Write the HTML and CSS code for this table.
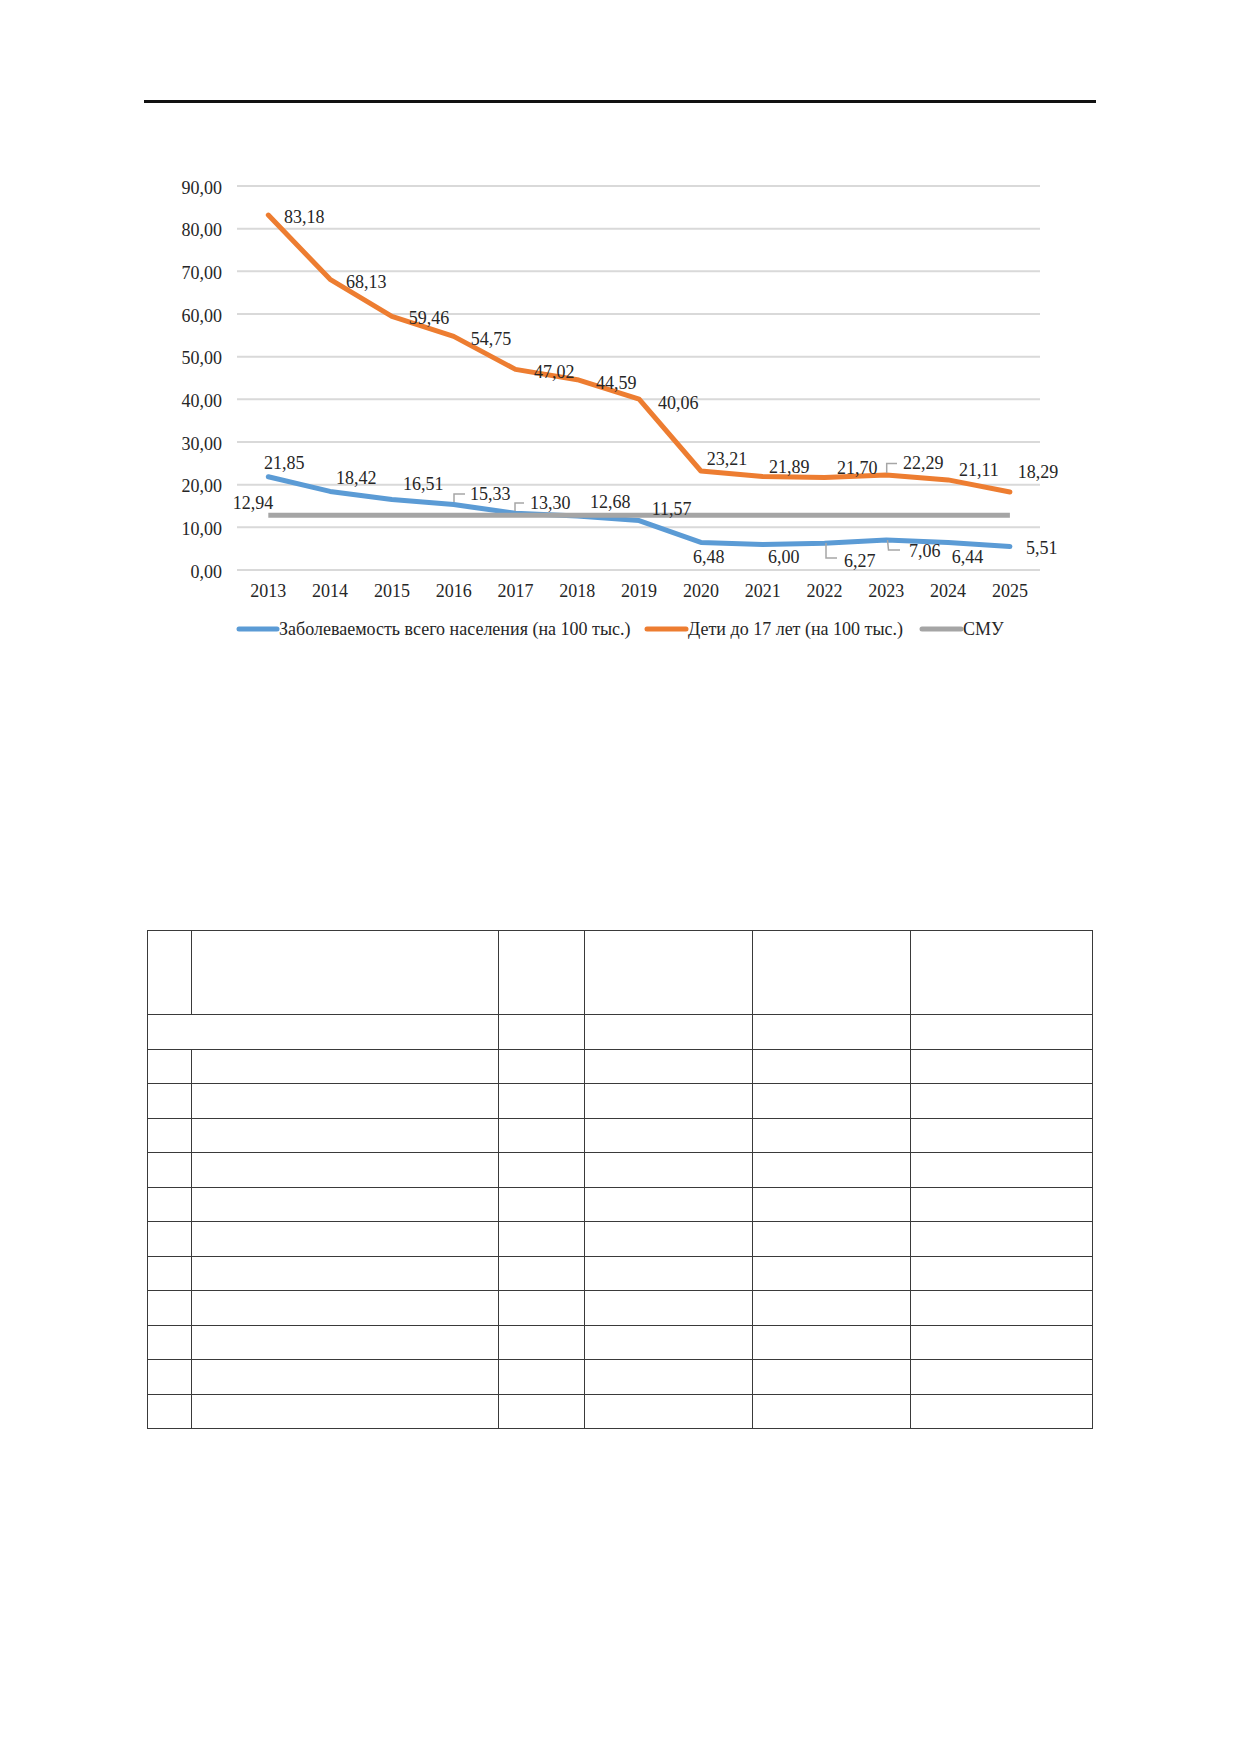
FILE: index.html
```html
<!DOCTYPE html>
<html lang="ru">
<head>
<meta charset="utf-8">
<title>Заболеваемость</title>
<link rel="stylesheet" href="styles.css">
</head>
<body>
<div class="page">
  <div class="rule"></div>

  <svg class="chart" width="1240" height="500" viewBox="0 160 1240 500" xmlns="http://www.w3.org/2000/svg">
    <g class="grid">
      <line x1="237" y1="186" x2="1040" y2="186"/>
      <line x1="237" y1="228.7" x2="1040" y2="228.7"/>
      <line x1="237" y1="271.3" x2="1040" y2="271.3"/>
      <line x1="237" y1="314" x2="1040" y2="314"/>
      <line x1="237" y1="356.7" x2="1040" y2="356.7"/>
      <line x1="237" y1="399.3" x2="1040" y2="399.3"/>
      <line x1="237" y1="442" x2="1040" y2="442"/>
      <line x1="237" y1="484.7" x2="1040" y2="484.7"/>
      <line x1="237" y1="527.3" x2="1040" y2="527.3"/>
      <line x1="237" y1="570" x2="1040" y2="570"/>
    </g>
    <g class="ylab">
      <text x="222" y="193.5">90,00</text>
      <text x="222" y="236.2">80,00</text>
      <text x="222" y="278.8">70,00</text>
      <text x="222" y="321.5">60,00</text>
      <text x="222" y="364.2">50,00</text>
      <text x="222" y="406.8">40,00</text>
      <text x="222" y="449.5">30,00</text>
      <text x="222" y="492.2">20,00</text>
      <text x="222" y="534.8">10,00</text>
      <text x="222" y="577.5">0,00</text>
    </g>
    <g class="xlab">
      <text x="268.3" y="597">2013</text>
      <text x="330.1" y="597">2014</text>
      <text x="391.9" y="597">2015</text>
      <text x="453.7" y="597">2016</text>
      <text x="515.5" y="597">2017</text>
      <text x="577.3" y="597">2018</text>
      <text x="639.1" y="597">2019</text>
      <text x="700.9" y="597">2020</text>
      <text x="762.7" y="597">2021</text>
      <text x="824.5" y="597">2022</text>
      <text x="886.3" y="597">2023</text>
      <text x="948.1" y="597">2024</text>
      <text x="1009.9" y="597">2025</text>
    </g>

    <polyline class="s-blue" points="268.3,476.8 330.1,491.4 391.9,499.6 453.7,504.6 515.5,513.3 577.3,515.9 639.1,520.6 700.9,542.4 762.7,544.4 824.5,543.2 886.3,539.9 948.1,542.5 1009.9,546.5"/>
    <polyline class="s-orange" points="268.3,215.1 330.1,279.3 391.9,316.3 453.7,336.4 515.5,369.4 577.3,379.7 639.1,399.1 700.9,471 762.7,476.6 824.5,477.4 886.3,474.9 948.1,479.9 1009.9,492"/>
    <polyline class="s-grey" points="268.3,515.2 1009.9,515.2"/>

    <g class="leader">
      <polyline points="454,502 454,494 465,494"/>
      <polyline points="515,511 515,503 524,503"/>
      <polyline points="886.7,473 886.7,463.5 897,463.5"/>
      <polyline points="826,543 826,558 837,558"/>
      <polyline points="887.5,540 888.5,550 900,550"/>
    </g>

    <g class="dlab">
      <text x="284" y="223.3">83,18</text>
      <text x="346" y="287.7">68,13</text>
      <text x="408.7" y="324">59,46</text>
      <text x="470.7" y="345">54,75</text>
      <text x="534" y="378">47,02</text>
      <text x="596" y="388.5">44,59</text>
      <text x="658" y="408.7">40,06</text>
      <text x="706.7" y="465.3">23,21</text>
      <text x="769" y="472.7">21,89</text>
      <text x="837" y="473.7">21,70</text>
      <text x="903" y="469.3">22,29</text>
      <text x="959" y="476">21,11</text>
      <text x="1017.7" y="477.7">18,29</text>

      <text x="264" y="468.7">21,85</text>
      <text x="336" y="484.3">18,42</text>
      <text x="403" y="490">16,51</text>
      <text x="470" y="500">15,33</text>
      <text x="530" y="508.7">13,30</text>
      <text x="590" y="507.7">12,68</text>
      <text x="651.7" y="515">11,57</text>
      <text x="693" y="563.3">6,48</text>
      <text x="768" y="563">6,00</text>
      <text x="844" y="567">6,27</text>
      <text x="909" y="557">7,06</text>
      <text x="951.7" y="563.3">6,44</text>
      <text x="1026" y="553.7">5,51</text>

      <text x="232.7" y="508.7">12,94</text>
    </g>

    <g class="legend">
      <line class="lg-blue" x1="239" y1="629" x2="277" y2="629"/>
      <text x="279" y="635">Заболеваемость всего населения (на 100 тыс.)</text>
      <line class="lg-orange" x1="647" y1="629" x2="686" y2="629"/>
      <text x="688" y="635">Дети до 17 лет (на 100 тыс.)</text>
      <line class="lg-grey" x1="922" y1="629" x2="961" y2="629"/>
      <text x="963" y="635">СМУ</text>
    </g>
  </svg>

  <table class="data">
    <colgroup>
      <col class="c1"><col class="c2"><col class="c3"><col class="c4"><col class="c5"><col class="c6">
    </colgroup>
    <tr class="head"><td></td><td></td><td></td><td></td><td></td><td></td></tr>
    <tr><td colspan="2"></td><td></td><td></td><td></td><td></td></tr>
    <tr><td></td><td></td><td></td><td></td><td></td><td></td></tr>
    <tr><td></td><td></td><td></td><td></td><td></td><td></td></tr>
    <tr><td></td><td></td><td></td><td></td><td></td><td></td></tr>
    <tr><td></td><td></td><td></td><td></td><td></td><td></td></tr>
    <tr><td></td><td></td><td></td><td></td><td></td><td></td></tr>
    <tr><td></td><td></td><td></td><td></td><td></td><td></td></tr>
    <tr><td></td><td></td><td></td><td></td><td></td><td></td></tr>
    <tr><td></td><td></td><td></td><td></td><td></td><td></td></tr>
    <tr><td></td><td></td><td></td><td></td><td></td><td></td></tr>
    <tr><td></td><td></td><td></td><td></td><td></td><td></td></tr>
    <tr><td></td><td></td><td></td><td></td><td></td><td></td></tr>
  </table>
</div>
</body>
</html>
```

FILE: styles.css
```css
html, body {
  margin: 0;
  padding: 0;
  background: #ffffff;
}

body {
  font-family: "Liberation Serif", "Times New Roman", serif;
  color: #262626;
}

.page {
  width: 1240px;
  height: 1754px;
  overflow: hidden;
}

.rule {
  margin: 100px 0 0 144px;
  width: 952px;
  height: 3px;
  background: #111111;
}

.chart {
  display: block;
  margin-top: 57px;
}

.chart text {
  font-family: "Liberation Serif", "Times New Roman", serif;
  font-size: 18px;
  fill: #262626;
}

.grid line {
  stroke: #d9d9d9;
  stroke-width: 2;
}

.ylab text {
  text-anchor: end;
}

.xlab text {
  text-anchor: middle;
}

.s-blue, .s-orange, .s-grey {
  fill: none;
  stroke-width: 5;
  stroke-linejoin: round;
  stroke-linecap: round;
}

.s-blue { stroke: #5b9bd5; }
.s-orange { stroke: #ed7d31; }
.s-grey { stroke: #a5a5a5; stroke-linecap: butt; }

.leader polyline {
  fill: none;
  stroke: #a6a6a6;
  stroke-width: 1.5;
}

.legend line {
  stroke-width: 5;
  stroke-linecap: round;
}

.lg-blue { stroke: #5b9bd5; }
.lg-orange { stroke: #ed7d31; }
.lg-grey { stroke: #a5a5a5; }

.data {
  margin: 270px 0 0 147px;
  width: 946px;
  border-collapse: collapse;
  table-layout: fixed;
}

.data td {
  border: 1.5px solid #3a3a3a;
  padding: 0;
  height: 34.5px;
  box-sizing: border-box;
}

.data .head td {
  height: 84.3px;
}

.c1 { width: 44.4px; }
.c2 { width: 306.6px; }
.c3 { width: 86px; }
.c4 { width: 168.4px; }
.c5 { width: 157.3px; }
.c6 { width: 182.7px; }
```
